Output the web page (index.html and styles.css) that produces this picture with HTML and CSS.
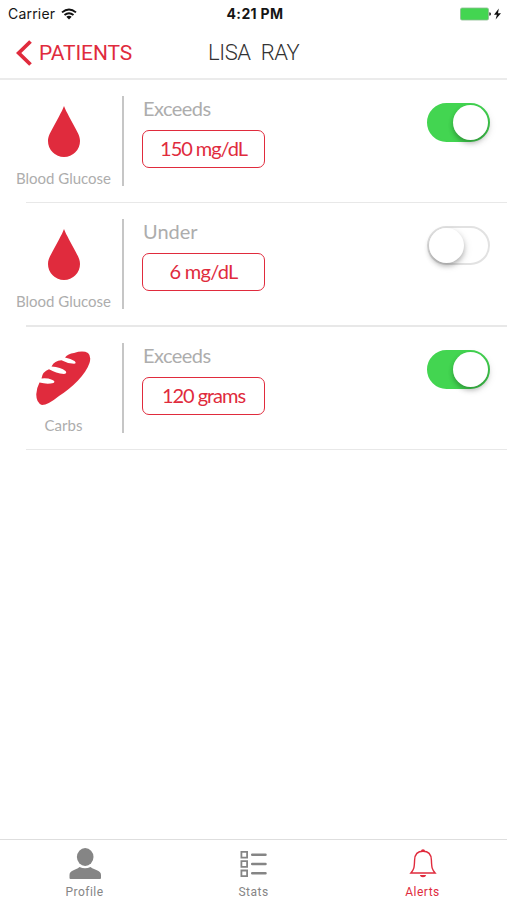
FILE: index.html
```html
<!DOCTYPE html>
<html lang="en">
<head>
<meta charset="utf-8">
<title>Patient alerts</title>
<link rel="stylesheet" href="styles.css">
</head>
<body>
<svg class="defs" width="0" height="0" aria-hidden="true">
  <symbol id="drop" viewBox="0 0 32 51"><path d="M16 0C17 3 19 6.500 21 10.500L27.500 22.500C30.500 28 32 31 32 35A16 16 0 0 1 0 35C0 31 1.500 28 4.500 22.500L11 10.500C13 6.500 15 3 16 0Z"/></symbol>
</svg>
<div class="screen">
  <header>
    <div class="status">
      <div class="carrier"><span>Carrier</span>
        <svg width="16" height="12" viewBox="0 0 16 12" fill="none" stroke="#111" stroke-width="1.900"><path d="M1 4.400Q8-1.600 15 4.400M3.500 7.100Q8 3.300 12.500 7.100"/><path d="M5.300 8.700Q8 6.700 10.700 8.700L8 11.600Z" fill="#111" stroke="none"/></svg>
      </div>
      <div class="time">4:21 PM</div>
      <svg class="battery" width="42" height="14" viewBox="0 0 42 14"><rect x=".5" y="1" width="28" height="12" rx="1.500" fill="#43d551" stroke="#8bbd91" stroke-width=".8"/><path d="M29.300 5.300Q31 5.500 31 7T29.300 8.700Z" fill="#222"/><path d="M38.800 1.500L34 7.700H36.900L35.600 12.500L41 6.200H38Z" fill="#111"/></svg>
    </div>
    <nav class="navbar">
      <div class="back"><svg width="17" height="26" viewBox="0 0 17 26" fill="none" stroke="#e02b3d" stroke-width="3.800"><path d="M14.500 1.500L2.700 13L14.500 24.500"/></svg><span>PATIENTS</span></div>
      <h1>LISA <span>RAY</span></h1>
    </nav>
  </header>
  <main>
    <section class="row">
      <div class="kind"><svg class="icon drop"><use href="#drop"/></svg><span class="label">Blood Glucose</span></div>
      <div class="rule"><span class="cond exceeds">Exceeds</span><span class="value">150 mg/dL</span></div>
      <div class="toggle on"><i></i></div>
    </section>
    <section class="row">
      <div class="kind"><svg class="icon drop"><use href="#drop"/></svg><span class="label">Blood Glucose</span></div>
      <div class="rule"><span class="cond">Under</span><span class="value short">6 mg/dL</span></div>
      <div class="toggle"><i></i></div>
    </section>
    <section class="row">
      <div class="kind"><svg class="icon bread" viewBox="0 0 55 55"><path d="M3.500 31.500Q11 33.500 17.500 32Q20 30.500 16 28.700Q11 26.800 5.500 27.500Q6.500 20.500 13 18.300Q20 22.500 28 23Q31.500 22.500 29.500 20Q25 16 15.500 15.500Q18.500 9.500 25.500 9.300Q31 12.500 38 12.800Q41 12.300 38.500 10Q35 7.500 29 6.500Q32 2.500 38 2Q47-.8 52 2Q55.500 5 53.500 12C50 23 36 37 23 45Q12 54 6 54Q0 52 .3 43Q.6 37 3.500 31.500Z"/></svg><span class="label carbs">Carbs</span></div>
      <div class="rule"><span class="cond exceeds">Exceeds</span><span class="value">120 grams</span></div>
      <div class="toggle on"><i></i></div>
    </section>
  </main>
  <footer>
    <div class="tab"><svg width="34" height="34" viewBox="0 0 34 34" fill="#858585"><ellipse cx="17.200" cy="10" rx="8.300" ry="9"/><path d="M1.500 31V28C1.500 23 7.500 23.500 11.500 20Q17 22.500 22.500 20C27 23.500 33 23 33 28V31Q33 32 32 32H2.500Q1.500 32 1.500 31Z"/></svg><span>Profile</span></div>
    <div class="tab"><svg width="34" height="34" viewBox="0 0 34 34" fill="none" stroke="#858585"><path stroke-width="1.800" d="M4.400 4.900h5.700v5.700H4.400ZM4.400 14.200h5.700v5.700H4.400ZM4.400 23.500h5.700v5.700H4.400Z"/><path stroke-width="2.500" stroke-linecap="round" d="M15.200 7.700h13.300M15.200 17h13.300M15.200 26.300h13.300"/></svg><span>Stats</span></div>
    <div class="tab active"><svg width="34" height="34" viewBox="0 0 34 34" fill="none" stroke="#e02b3d" stroke-width="1.400"><path d="M4.900 26C8 22.500 8.300 21 8.600 13C8.800 7.500 12 4.300 17 4.300S25.200 7.500 25.400 13C25.700 21 26 22.500 29.100 26Z"/><path d="M15 4Q15 2.300 17 2.300T19 4ZM13.800 28H20.200Q19.700 30.300 17 30.300T13.800 28Z" fill="#e02b3d" stroke="none"/></svg><span>Alerts</span></div>
  </footer>
</div>
</body>
</html>
```
FILE: styles.css
```css
* { box-sizing: border-box; }
body { margin: 0; background: #fff; font-family: Lato, sans-serif; }
.defs { display: block; height: 0; }
svg { flex: none; }
.screen { width: 507px; height: 900px; display: flex; flex-direction: column; overflow: hidden; }
header { height: 80px; border-bottom: 2px solid #ebebeb; flex: none; }
.status { height: 27px; display: grid; grid-template-columns: 1fr auto 1fr; align-items: center; padding: 0 5px 0 8px; font: 14px/26px Inter, sans-serif; color: #151515; }
.carrier { display: flex; align-items: center; gap: 6px; letter-spacing: .2px; }
.time { font-weight: 700; letter-spacing: .35px; }
.battery { justify-self: end; }
.navbar { height: 51px; display: grid; grid-template-columns: 208px 1fr; align-items: center; }
.back { display: flex; align-items: center; gap: 6px; padding-left: 16px; color: #e02b3d; font: 21px/26px Roboto, sans-serif; letter-spacing: -.1px; }
h1 { margin: 0; color: #333; font: 300 22px/26px Roboto, sans-serif; letter-spacing: -.4px; }
h1 span { margin-left: 5px; }
main { flex: 1; }
.row { height: 123.400px; display: flex; align-items: flex-start; position: relative; padding-top: 16px; }
.row::after { content: ""; position: absolute; left: 26px; right: 0; bottom: 0; height: 1.500px; background: #e8e8e8; }
.kind { width: 124px; height: 90px; border-right: 2px solid #c6c6c6; padding: 10px 0 0 5px; display: flex; flex-direction: column; align-items: center; flex: none; }
.icon { fill: #e02b3d; display: block; }
.drop { width: 32px; height: 51px; }
.bread { width: 55px; height: 55px; margin: -2px 0; }
.label { color: #adadad; font-size: 15px; line-height: 20px; margin-top: 11px; white-space: nowrap; letter-spacing: 0; }
.rule { margin-left: 18px; width: 124px; padding-right: 1px; }
.cond { display: block; height: 34px; padding-left: 1px; color: #adadad; font-size: 20px; line-height: 25px; }
.exceeds { letter-spacing: -.55px; }
.value { display: block; height: 38px; border: 1px solid #e02b3d; border-radius: 7px; color: #e02b3d; font-size: 20px; line-height: 35px; text-align: center; white-space: nowrap; letter-spacing: -1.050px; }
.short { letter-spacing: -.7px; }
.toggle { margin: 7px 17px 0 auto; width: 63px; height: 39px; border: 2px solid #e2e2e2; border-radius: 20px; display: flex; }
.toggle i { width: 35px; height: 35px; border-radius: 50%; background: #fff; box-shadow: 0 3px 5px rgba(0,0,0,.25), 2px 3px 9px rgba(0,0,0,.08); }
.toggle.on { background: #43d551; border-color: #43d551; justify-content: flex-end; }
footer { height: 61px; flex: none; border-top: 1.500px solid #dedede; display: grid; grid-template-columns: repeat(3, 169px); }
.tab { display: flex; flex-direction: column; align-items: center; padding-top: 7px; color: #858585; font: 12px/16px Roboto, sans-serif; letter-spacing: .5px; }
.tab svg { display: block; }
.tab span { margin-top: 3px; }
.active { color: #e02b3d; }
```
